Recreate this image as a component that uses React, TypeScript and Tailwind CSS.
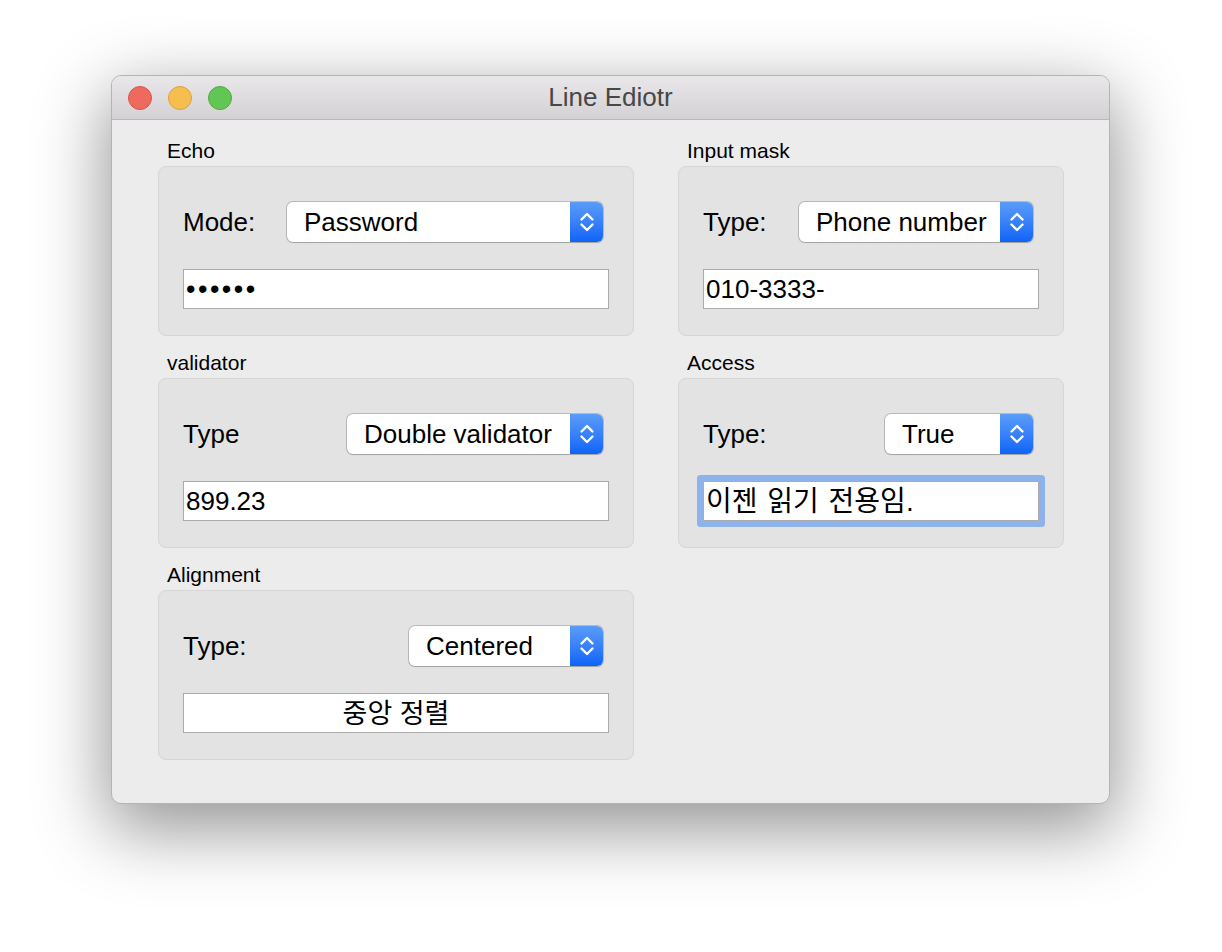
import React from "react";

const font = { fontFamily: '"Liberation Sans", Arial, "Noto Sans CJK KR", sans-serif' };

function Chevrons() {
  return (
    <svg width="16" height="26" viewBox="0 0 16 26" fill="none" stroke="white" strokeWidth="2.4" strokeLinecap="round" strokeLinejoin="round">
      <path d="M2.5 10.5 L8 5 L13.5 10.5" />
      <path d="M2.5 15.5 L8 21 L13.5 15.5" />
    </svg>
  );
}

function Combo({ value, width }: { value: string; width?: string }) {
  return (
    <div
      className={`flex h-[40px] items-stretch rounded-[6px] bg-white shadow-[0_0_0_1px_rgba(0,0,0,0.18),0_1px_1px_rgba(0,0,0,0.12)] ${width ?? "flex-1"}`}
    >
      <div className="flex flex-1 items-center pl-[17px] text-[26px] leading-none text-black whitespace-nowrap overflow-hidden">
        {value}
      </div>
      <div className="flex w-[33px] items-center justify-center rounded-r-[6px] bg-gradient-to-b from-[#5b9cf9] to-[#0d63f7]">
        <Chevrons />
      </div>
    </div>
  );
}

function LineEdit({ children, center, focused }: { children: React.ReactNode; center?: boolean; focused?: boolean }) {
  return (
    <div
      className={`flex h-[40px] items-center border border-[#ababab] bg-white px-[2px] text-[26px] leading-none text-black ${
        center ? "justify-center" : ""
      } ${focused ? "rounded-[1px] shadow-[0_0_0_6px_#8db3ea]" : ""}`}
    >
      {children}
    </div>
  );
}

function Group({ title, children }: { title: string; children: React.ReactNode }) {
  return (
    <div>
      <div className="h-[26px] pl-[9px] text-[21px] leading-[26px] text-black">{title}</div>
      <div className="mt-[2px] flex h-[170px] flex-col rounded-[8px] border border-[#d6d6d6] bg-[#e3e3e3] pl-[24px] pr-[24px] pt-[35px]">
        {children}
      </div>
    </div>
  );
}

export default function App() {
  return (
    <div className="min-h-[952px] w-full bg-white pl-[111px] pt-[75px]" style={font}>
      <div className="flex h-[729px] w-[999px] flex-col overflow-hidden rounded-[10px] border border-[#b4b4b4] bg-[#ececec] shadow-[0_22px_70px_4px_rgba(0,0,0,0.42)]">
        {/* TITLE BAR */}
        <div className="relative flex h-[44px] shrink-0 items-center border-b border-[#b9b9b9] bg-gradient-to-b from-[#e9e7e9] to-[#d3d1d3]">
          <div className="flex gap-[16px] pl-[16px]">
            <span className="h-[24px] w-[24px] rounded-full border border-[#d9534a] bg-[#ef6a5e]" />
            <span className="h-[24px] w-[24px] rounded-full border border-[#dba33f] bg-[#f6be4f]" />
            <span className="h-[24px] w-[24px] rounded-full border border-[#53a843] bg-[#61c654]" />
          </div>
          <div className="absolute inset-0 flex items-center justify-center text-[26px] text-[#474747]">Line Ediotr</div>
        </div>

        {/* CONTENT */}
        <div className="grid grid-cols-[476px_386px] gap-x-[44px] gap-y-[14px] pl-[46px] pt-[18px]">
          <Group title="Echo">
            <div className="flex items-center">
              <span className="w-[104px] text-[26px] text-black">Mode:</span>
              <Combo value="Password" />
              <span className="w-[6px]" />
            </div>
            <div className="mt-[27px]">
              <LineEdit>
                <span className="text-[27px] tracking-[2.5px]">••••••</span>
              </LineEdit>
            </div>
          </Group>

          <Group title="Input mask">
            <div className="flex items-center">
              <span className="w-[96px] text-[26px] text-black">Type:</span>
              <Combo value="Phone number" />
              <span className="w-[6px]" />
            </div>
            <div className="mt-[27px]">
              <LineEdit>010-3333-</LineEdit>
            </div>
          </Group>

          <Group title="validator">
            <div className="flex items-center justify-between">
              <span className="text-[26px] text-black">Type</span>
              <div className="flex">
                <Combo value="Double validator" width="w-[256px]" />
                <span className="w-[6px]" />
              </div>
            </div>
            <div className="mt-[27px]">
              <LineEdit>899.23</LineEdit>
            </div>
          </Group>

          <Group title="Access">
            <div className="flex items-center justify-between">
              <span className="text-[26px] text-black">Type:</span>
              <div className="flex">
                <Combo value="True" width="w-[148px]" />
                <span className="w-[6px]" />
              </div>
            </div>
            <div className="mt-[27px]">
              <LineEdit focused>
                <span className="pt-[2px] text-[28px] [word-spacing:2px]">이젠 읽기 전용임.</span>
              </LineEdit>
            </div>
          </Group>

          <Group title="Alignment">
            <div className="flex items-center justify-between">
              <span className="text-[26px] text-black">Type:</span>
              <div className="flex">
                <Combo value="Centered" width="w-[194px]" />
                <span className="w-[6px]" />
              </div>
            </div>
            <div className="mt-[27px]">
              <LineEdit center>
                <span className="pt-[2px] text-[27px]">중앙 정렬</span>
              </LineEdit>
            </div>
          </Group>
        </div>
      </div>
    </div>
  );
}
